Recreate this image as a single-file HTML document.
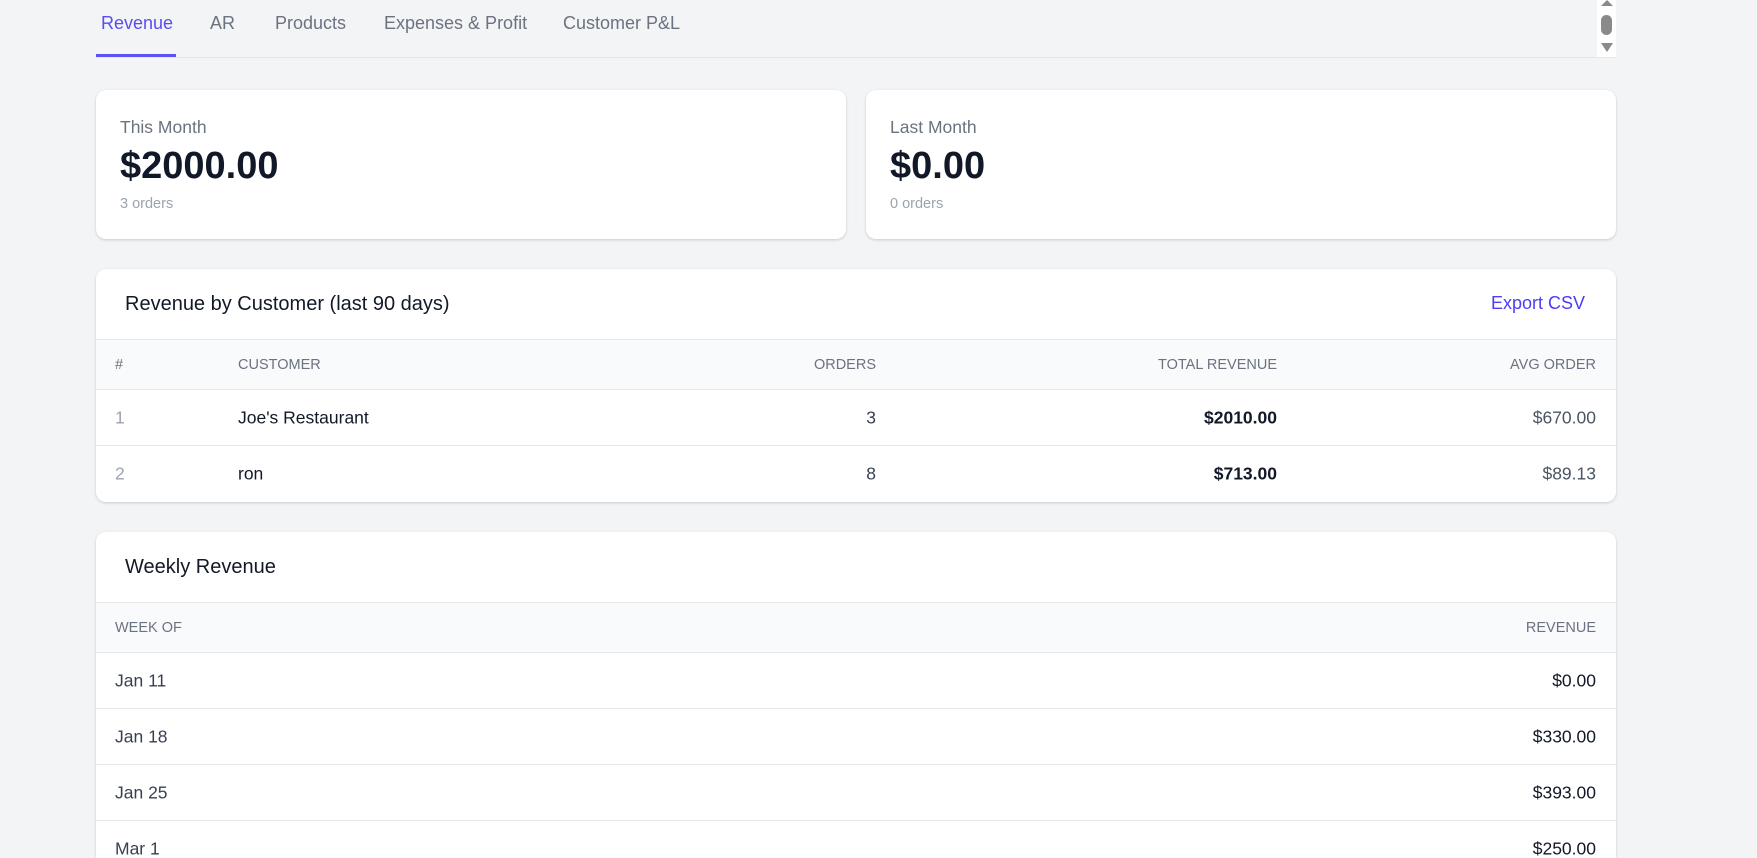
<!DOCTYPE html>
<html><head><meta charset="utf-8"><style>
*{box-sizing:border-box;margin:0;padding:0}
html,body{width:1757px;height:858px;overflow:hidden;background:#f3f4f6;font-family:"Liberation Sans",Arial,sans-serif;color:#111827}
.abs{position:absolute}
.tabs{position:absolute;left:96px;top:0;width:1520px;height:58px;border-bottom:1.5px solid #e5e7eb}
.tab{position:absolute;top:13px;font-size:18px;color:#6b7280}
.ul{position:absolute;left:0;top:54px;width:80px;height:3px;background:#5b50f5}
.sb{position:absolute;left:1597px;top:0;width:19px;height:57px;background:#fff}
.card{position:absolute;background:#fff;border-radius:10px;box-shadow:0 1px 3px rgba(0,0,0,.12),0 1px 2px rgba(0,0,0,.06)}
.lbl{position:absolute;left:24px;top:27px;font-size:17.5px;color:#6b7280}
.big{position:absolute;left:24px;top:55px;font-size:38px;font-weight:bold;color:#111827}
.sub{position:absolute;left:24px;top:106px;font-size:14.5px;color:#9ca3af}
.title{position:absolute;left:29px;top:24px;font-size:20px;color:#111827}
.thead{position:absolute;left:0;right:0;height:51px;background:#f9fafb;border-top:1.5px solid #e5e7eb;border-bottom:1.5px solid #e5e7eb}
.row{position:absolute;left:0;right:0;height:56px;border-bottom:1.5px solid #e5e7eb}
.c{position:absolute;top:50%;transform:translateY(-50%);white-space:nowrap}
.h{font-size:14.5px;color:#6b7280}
.d{font-size:17.5px}
</style></head><body>
<div class="tabs">
 <div class="tab" style="left:5px;color:#5b4cf0">Revenue</div>
 <div class="tab" style="left:114px">AR</div>
 <div class="tab" style="left:179px">Products</div>
 <div class="tab" style="left:288px">Expenses &amp; Profit</div>
 <div class="tab" style="left:467px">Customer P&amp;L</div>
 <div class="ul"></div>
</div>
<div class="sb">
 <div class="abs" style="left:4px;top:0;width:0;height:0;border-left:6px solid transparent;border-right:6px solid transparent;border-bottom:6px solid #8a8a8a"></div>
 <div class="abs" style="left:4px;top:15px;width:11px;height:20px;border-radius:6px;background:#8a8a8a"></div>
 <div class="abs" style="left:4px;top:43px;width:0;height:0;border-left:6px solid transparent;border-right:6px solid transparent;border-top:9px solid #8a8a8a"></div>
</div>

<div class="card" style="left:96px;top:90px;width:750px;height:149px">
 <div class="lbl">This Month</div><div class="big">$2000.00</div><div class="sub">3 orders</div>
</div>
<div class="card" style="left:866px;top:90px;width:750px;height:149px">
 <div class="lbl">Last Month</div><div class="big">$0.00</div><div class="sub">0 orders</div>
</div>

<div class="card" style="left:96px;top:269px;width:1520px;height:233px;overflow:hidden">
 <div class="title">Revenue by Customer (last 90 days)</div>
 <div class="abs" style="right:31px;top:24px;font-size:18px;color:#4f3cf5">Export CSV</div>
 <div class="thead" style="top:70px">
  <div class="c h" style="left:19px">#</div>
  <div class="c h" style="left:142px">CUSTOMER</div>
  <div class="c h" style="right:740px">ORDERS</div>
  <div class="c h" style="right:339px">TOTAL REVENUE</div>
  <div class="c h" style="right:20px">AVG ORDER</div>
 </div>
 <div class="row" style="top:121px">
  <div class="c d" style="left:19px;color:#9ca3af">1</div>
  <div class="c d" style="left:142px">Joe's Restaurant</div>
  <div class="c d" style="right:740px;color:#374151">3</div>
  <div class="c d" style="right:339px;font-weight:bold">$2010.00</div>
  <div class="c d" style="right:20px;color:#4b5563">$670.00</div>
 </div>
 <div class="row" style="top:177px;border-bottom:none">
  <div class="c d" style="left:19px;color:#9ca3af">2</div>
  <div class="c d" style="left:142px">ron</div>
  <div class="c d" style="right:740px;color:#374151">8</div>
  <div class="c d" style="right:339px;font-weight:bold">$713.00</div>
  <div class="c d" style="right:20px;color:#4b5563">$89.13</div>
 </div>
</div>

<div class="card" style="left:96px;top:532px;width:1520px;height:326px;overflow:hidden;border-radius:10px 10px 0 0">
 <div class="title">Weekly Revenue</div>
 <div class="thead" style="top:70px">
  <div class="c h" style="left:19px">WEEK OF</div>
  <div class="c h" style="right:20px">REVENUE</div>
 </div>
 <div class="row" style="top:121px"><div class="c d" style="left:19px;color:#374151">Jan 11</div><div class="c d" style="right:20px">$0.00</div></div>
 <div class="row" style="top:177px"><div class="c d" style="left:19px;color:#374151">Jan 18</div><div class="c d" style="right:20px">$330.00</div></div>
 <div class="row" style="top:233px"><div class="c d" style="left:19px;color:#374151">Jan 25</div><div class="c d" style="right:20px">$393.00</div></div>
 <div class="row" style="top:289px;border-bottom:none"><div class="c d" style="left:19px;color:#374151">Mar 1</div><div class="c d" style="right:20px">$250.00</div></div>
</div>
</body></html>
